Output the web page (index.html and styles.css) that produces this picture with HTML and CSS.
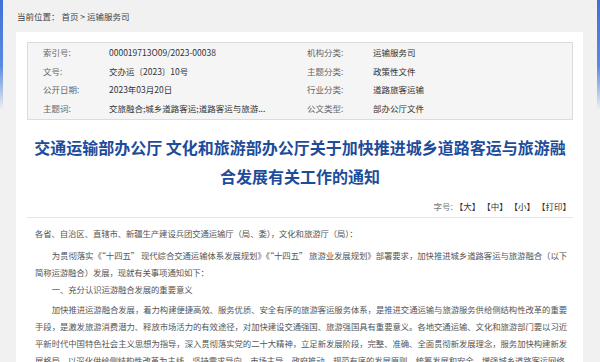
FILE: index.html
```html
<!DOCTYPE html>
<html lang="zh-CN">
<head>
<meta charset="utf-8">
<link rel="stylesheet" href="styles.css">
</head>
<body>
<div class="edge edge-left"></div>
<div class="edge edge-right"></div>
<div class="crumb">当前位置：&nbsp;首页 &gt; 运输服务司</div>
<div class="panel">
  <div class="info">
    <span class="lbl">索引号:</span><span class="val">000019713O09/2023-00038</span>
    <span class="lbl">机构分类:</span><span class="val">运输服务司</span>
    <span class="lbl">文号:</span><span class="val">交办运〔2023〕10号</span>
    <span class="lbl">主题分类:</span><span class="val">政策性文件</span>
    <span class="lbl">公开日期:</span><span class="val">2023年03月20日</span>
    <span class="lbl">行业分类:</span><span class="val">道路旅客运输</span>
    <span class="lbl">主题词:</span><span class="val ellip">交旅融合;城乡道路客运;道路客运与旅游...</span>
    <span class="lbl">公文类型:</span><span class="val">部办公厅文件</span>
  </div>
  <h1 class="title">交通运输部办公厅 文化和旅游部办公厅关于加快推进城乡道路客运与旅游融合发展有关工作的通知</h1>
  <div class="fontsize"><span class="fs-label">字号:</span> 【大】 【中】 【小】 【打印】</div>
  <div class="content">
    <p class="p1">各省、自治区、直辖市、新疆生产建设兵团交通运输厅（局、委），文化和旅游厅（局）：</p>
    <p class="ind">为贯彻落实《“十四五” 现代综合交通运输体系发展规划》《“十四五” 旅游业发展规划》部署要求，加快推进城乡道路客运与旅游融合（以下简称运游融合）发展，现就有关事项通知如下：</p>
    <p class="ind p3">一、充分认识运游融合发展的重要意义</p>
    <p class="ind">加快推进运游融合发展，着力构建便捷高效、服务优质、安全有序的旅游客运服务体系，是推进交通运输与旅游服务供给侧结构性改革的重要手段，是激发旅游消费潜力、释放市场活力的有效途径，对加快建设交通强国、旅游强国具有重要意义。各地交通运输、文化和旅游部门要以习近平新时代中国特色社会主义思想为指导，深入贯彻落实党的二十大精神，立足新发展阶段，完整、准确、全面贯彻新发展理念，服务加快构建新发展格局，以深化供给侧结构性改革为主线，坚持需求导向、市场主导、政府推动、规范有序的发展原则，统筹发展和安全，增强城乡道路客运网络</p>
  </div>
</div>
</body>
</html>
```
FILE: styles.css
```css
html, body {
  margin: 0;
  padding: 0;
}
body {
  background: #f1f1f1;
  font-family: "Noto Sans CJK SC", "Noto Sans", sans-serif;
  color: #444;
  width: 600px;
  height: 362px;
  overflow: hidden;
  position: relative;
}
.edge {
  position: absolute;
  top: 0;
  width: 3px;
  height: 110px;
  background: linear-gradient(#3e72d6, #5a8ae0 60%, rgba(120, 160, 230, 0));
}
.edge-left { left: 0; }
.edge-right { right: 0; }
.crumb {
  height: 32px;
  line-height: 32px;
  padding-left: 17px;
  font-size: 8.5px;
  color: #444;
}
.panel {
  background: #fff;
  margin: 0 17px 0 16px;
  padding: 10px 10px 0 11px;
  height: 330px;
  box-sizing: border-box;
  overflow: hidden;
}
.info {
  display: grid;
  grid-template-columns: 66px 198px 66px 1fr;
  background: #f5f5f5;
  border: 1px solid #dcdcdc;
  padding: 0 0 2px 15px;
  font-size: 8.5px;
  line-height: 18.5px;
}
.lbl { color: #666; }
.val { color: #333; }
.ellip { white-space: nowrap; overflow: hidden; }
.title {
  margin: 13px 0 0;
  text-align: center;
  font-size: 16px;
  line-height: 29px;
  font-weight: bold;
  color: #1d4c9b;
}
.fontsize {
  text-align: right;
  font-size: 8.5px;
  line-height: 14px;
  margin-top: 8px;
  padding-right: 2px;
  padding-bottom: 4px;
  color: #333;
  border-bottom: 1px solid #e6e6e6;
}
.fs-label { color: #777; }
.content {
  padding: 7px 6px 0 8px;
  font-size: 8.4px;
  letter-spacing: -0.1px;
  line-height: 17px;
  color: #555;
  text-align: justify;
}
.content p {
  margin: 0;
}
.content p.p1 { margin-bottom: 5px; }
.content p.p3 { margin-bottom: 3px; }
.content p.ind {
  text-indent: 2em;
}
```
